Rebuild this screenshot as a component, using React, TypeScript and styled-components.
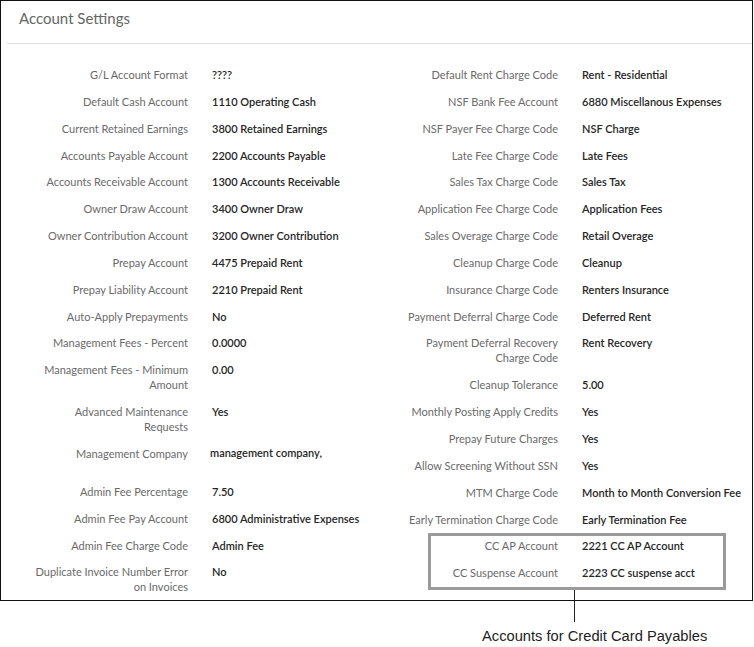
import styled, { createGlobalStyle } from 'styled-components';

const GlobalStyle = createGlobalStyle`
  body {
    margin: 0;
    background: #fff;
    font-family: Lato, "Liberation Sans", sans-serif;
  }
`

type Setting = { label: string[]; value: string; tall?: boolean }

const leftSettings: Setting[] = [
  { label: ['G/L Account Format'], value: '????' },
  { label: ['Default Cash Account'], value: '1110 Operating Cash' },
  { label: ['Current Retained Earnings'], value: '3800 Retained Earnings' },
  { label: ['Accounts Payable Account'], value: '2200 Accounts Payable' },
  { label: ['Accounts Receivable Account'], value: '1300 Accounts Receivable' },
  { label: ['Owner Draw Account'], value: '3400 Owner Draw' },
  { label: ['Owner Contribution Account'], value: '3200 Owner Contribution' },
  { label: ['Prepay Account'], value: '4475 Prepaid Rent' },
  { label: ['Prepay Liability Account'], value: '2210 Prepaid Rent' },
  { label: ['Auto-Apply Prepayments'], value: 'No' },
  { label: ['Management Fees - Percent'], value: '0.0000' },
  { label: ['Management Fees - Minimum', 'Amount'], value: '0.00' },
  { label: ['Advanced Maintenance', 'Requests'], value: 'Yes' },
  { label: ['Management Company'], value: 'management company,', tall: true },
  { label: ['Admin Fee Percentage'], value: '7.50' },
  { label: ['Admin Fee Pay Account'], value: '6800 Administrative Expenses' },
  { label: ['Admin Fee Charge Code'], value: 'Admin Fee' },
  { label: ['Duplicate Invoice Number Error', 'on Invoices'], value: 'No' },
]

const rightSettings: Setting[] = [
  { label: ['Default Rent Charge Code'], value: 'Rent - Residential' },
  { label: ['NSF Bank Fee Account'], value: '6880 Miscellanous Expenses' },
  { label: ['NSF Payer Fee Charge Code'], value: 'NSF Charge' },
  { label: ['Late Fee Charge Code'], value: 'Late Fees' },
  { label: ['Sales Tax Charge Code'], value: 'Sales Tax' },
  { label: ['Application Fee Charge Code'], value: 'Application Fees' },
  { label: ['Sales Overage Charge Code'], value: 'Retail Overage' },
  { label: ['Cleanup Charge Code'], value: 'Cleanup' },
  { label: ['Insurance Charge Code'], value: 'Renters Insurance' },
  { label: ['Payment Deferral Charge Code'], value: 'Deferred Rent' },
  { label: ['Payment Deferral Recovery', 'Charge Code'], value: 'Rent Recovery' },
  { label: ['Cleanup Tolerance'], value: '5.00' },
  { label: ['Monthly Posting Apply Credits'], value: 'Yes' },
  { label: ['Prepay Future Charges'], value: 'Yes' },
  { label: ['Allow Screening Without SSN'], value: 'Yes' },
  { label: ['MTM Charge Code'], value: 'Month to Month Conversion Fee' },
  { label: ['Early Termination Charge Code'], value: 'Early Termination Fee' },
  { label: ['CC AP Account'], value: '2221 CC AP Account' },
  { label: ['CC Suspense Account'], value: '2223 CC suspense acct' },
]

const Page = styled.div`
  position: relative;
  width: 754px;
  height: 647px;
`

const Frame = styled.div`
  width: 753px;
  height: 601px;
  box-sizing: border-box;
  border: 1.5px solid #111;
  padding-left: 6px;
`

const Header = styled.div`
  height: 43px;
  border-bottom: 1px solid #dcdcdc;
  padding: 8px 0 0 12px;
  box-sizing: border-box;
  font-size: 15px;
  line-height: 19px;
  color: #666;
`

const Body = styled.div`
  display: flex;
  padding: 23px 0 0 21px;
`

const Column = styled.div<{ $width?: number }>`
  display: grid;
  grid-template-columns: 160px 1fr;
  column-gap: 24px;
  row-gap: 11.85px;
  align-content: start;
  width: ${p => (p.$width ? `${p.$width}px` : 'auto')};
  flex: ${p => (p.$width ? 'none' : '1')};
  font-size: 11px;
  line-height: 15px;
`

const Label = styled.div`
  text-align: right;
  color: #6a6a6a;
  white-space: nowrap;
`

const Value = styled.div<{ $tall?: boolean }>`
  color: #262626;
  font-weight: 600;
  white-space: nowrap;
  min-height: ${p => (p.$tall ? '27px' : '0')};
  margin: ${p => (p.$tall ? '-1px 0 0 -2px' : '0')};
`

const Annotation = styled.div`
  position: absolute;
  left: 428px;
  top: 533px;
  width: 298px;
`

const Highlight = styled.div`
  height: 57px;
  box-sizing: border-box;
  border: 3px solid #9a9a9a;
`

const Connector = styled.div`
  width: 1px;
  height: 32px;
  margin-left: 146px;
  background: #222;
`

const Caption = styled.div`
  margin: 5px 0 0 54px;
  font-family: "Liberation Sans", Arial, sans-serif;
  font-size: 14.7px;
  line-height: 18px;
  color: #222;
  white-space: nowrap;
`

function SettingRows({ items }: { items: Setting[] }) {
  return (
    <>
      {items.map(item => (
        <>
          <Label key={item.label.join(' ')}>
            {item.label.map((line, i) => (
              <div key={i}>{line}</div>
            ))}
          </Label>
          <Value $tall={item.tall}>{item.value}</Value>
        </>
      ))}
    </>
  )
}

export default function App() {
  return (
    <Page>
      <GlobalStyle />
      <Frame>
        <Header>Account Settings</Header>
        <Body>
          <Column $width={370}>
            <SettingRows items={leftSettings} />
          </Column>
          <Column>
            <SettingRows items={rightSettings} />
          </Column>
        </Body>
      </Frame>
      <Annotation>
        <Highlight />
        <Connector />
        <Caption>Accounts for Credit Card Payables</Caption>
      </Annotation>
    </Page>
  )
}
